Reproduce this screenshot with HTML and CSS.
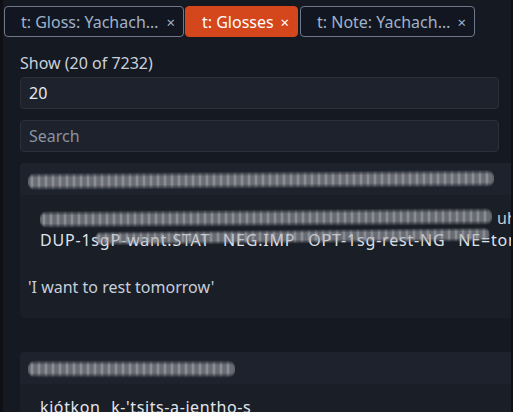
FILE: index.html
```html
<!DOCTYPE html>
<html>
<head>
<meta charset="utf-8">
<link rel="stylesheet" href="styles.css">
</head>
<body>
<div class="pane">
  <div class="tabs">
    <div class="tab"><span class="tab-title">t: Gloss: Yachach…</span><span class="tab-x">×</span></div>
    <div class="tab active"><span class="tab-title">t: Glosses</span><span class="tab-x">×</span></div>
    <div class="tab"><span class="tab-title">t: Note: Yachach…</span><span class="tab-x">×</span></div>
  </div>
  <div class="content">
    <label class="label">Show (20 of 7232)</label>
    <div class="input">20</div>
    <div class="input placeholder">Search</div>
    <div class="card">
      <div class="card-head"><div class="smear smear-head1"></div></div>
      <div class="card-body">
        <div class="igt">
          <div class="igt-line morph"><div class="smear smear-morph"></div><span class="tail">uh</span></div>
          <div class="igt-line gloss">DUP-1sgP-want.STAT NEG.IMP OPT-1sg-rest-NG NE=tomorrow<div class="smear smear-gloss"></div></div>
        </div>
        <div class="trans">'I want to rest tomorrow'</div>
      </div>
    </div>
    <div class="card">
      <div class="card-head"><div class="smear smear-head2"></div></div>
      <div class="card-body">
        <div class="igt">
          <div class="igt-line words">kiótkon k-'tsits-a-jentho-s</div>
        </div>
      </div>
    </div>
  </div>
</div>
</body>
</html>
```
FILE: styles.css
```css
html, body {
  margin: 0;
  padding: 0;
  background: #0e1015;
  overflow: hidden;
  height: 412px;
}
body {
  font-family: "Noto Sans", "Open Sans", sans-serif;
  color: #c9d1dc;
}
.pane {
  margin: 0 2px 0 3px;
  background: #151921;
  height: 412px;
  overflow: hidden;
}
.tabs {
  display: flex;
  gap: 1px;
  padding: 6px 0 0 1px;
  height: 31px;
}
.tab {
  display: flex;
  align-items: center;
  box-sizing: border-box;
  height: 31px;
  padding: 0 8px 0 16px;
  border: 1px solid #6f7888;
  border-radius: 4px;
  background: #121620;
  color: #9fb2c9;
  font-size: 16px;
  white-space: nowrap;
}
.tab:first-child { width: 180px; }
.tab:nth-child(3) { width: 175px; margin-left: 1px; }
.tab.active {
  width: 113px;
  background: #d4461b;
  border-color: #d4461b;
  color: #ffffff;
}
.tab-title { flex: 1; }
.tab-x {
  font-size: 15px;
  margin-left: 6px;
}
.content {
  padding: 16px 9px 0 17px;
  display: flex;
  flex-direction: column;
}
.label {
  font-size: 16px;
  line-height: 21px;
  color: #c9d1dc;
  margin-bottom: 3px;
}
.input {
  box-sizing: border-box;
  height: 32px;
  width: 479px;
  border: 1px solid #2a2f3a;
  border-radius: 4px;
  background: #1e222c;
  padding: 0 8px;
  font-size: 16px;
  line-height: 30px;
  color: #e6eaf0;
  margin-bottom: 11px;
}
.input.placeholder { color: #8a93a2; }
.card {
  width: 520px;
  background: #1a1e27;
  border-radius: 4px;
  margin-bottom: 34px;
  flex-shrink: 0;
}
.card-head {
  height: 32px;
  background: #1e222c;
  border-radius: 4px 4px 0 0;
  position: relative;
}
.card-body {
  padding: 12px 0 20px 8px;
}
.igt {
  padding-left: 12px;
}
.igt-line {
  position: relative;
  height: 22px;
  line-height: 22px;
  font-size: 16px;
  color: #e2e6ec;
  white-space: nowrap;
}
.gloss {
  letter-spacing: 0.8px;
  word-spacing: 8px;
  color: #dfe3e9;
}
.words {
  letter-spacing: 0.6px;
  word-spacing: 6px;
}
.morph {
  display: flex;
  align-items: center;
}
.tail {
  margin-left: 5px;
  color: #c7ccd4;
}
.trans {
  margin-top: 25px;
  font-size: 16px;
  line-height: 22px;
  color: #c6cfdb;
}
.smear {
  height: 18px;
  background: repeating-linear-gradient(90deg, rgba(215,215,220,0.9) 0 1.5px, rgba(110,112,120,0.4) 1.5px 3.5px);
  filter: blur(0.8px);
  border-radius: 7px;
  -webkit-mask-image: linear-gradient(180deg, transparent 0%, #000 28%, #000 72%, transparent 100%);
  mask-image: linear-gradient(180deg, transparent 0%, #000 28%, #000 72%, transparent 100%);
}
.smear-head1 {
  position: absolute;
  left: 8px;
  top: 8px;
  width: 466px;
  transform: rotate(-0.4deg);
}
.smear-head2 {
  position: absolute;
  left: 8px;
  top: 8px;
  width: 207px;
}
.smear-morph {
  width: 452px;
  transform: rotate(-0.4deg);
}
.smear-gloss {
  position: absolute;
  left: 55px;
  top: 0;
  width: 395px;
  height: 15px;
  transform: rotate(-0.6deg);
}
```
